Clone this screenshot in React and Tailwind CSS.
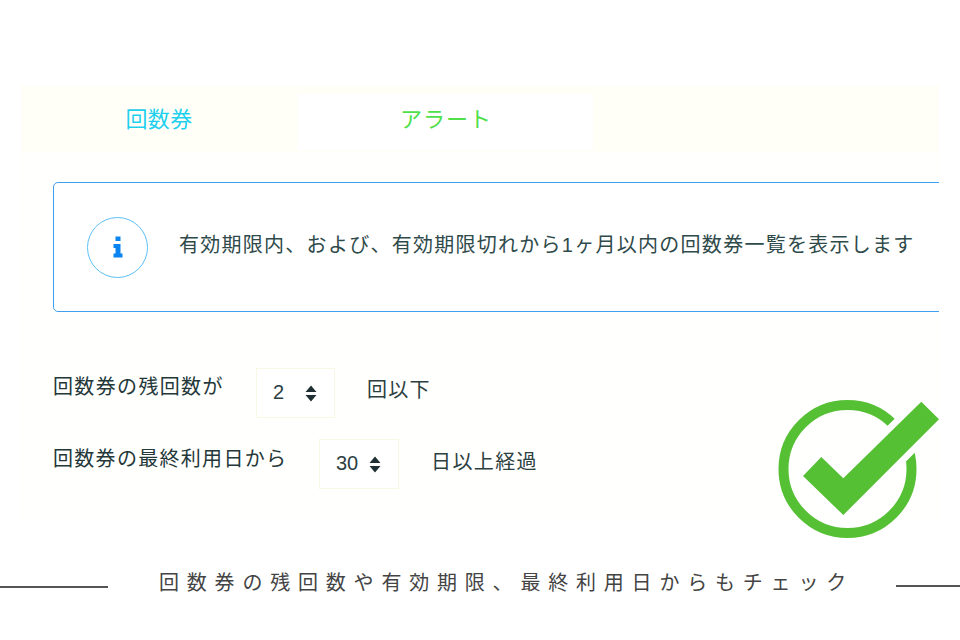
const CJK = "font-['Liberation_Sans','Noto_Sans_CJK_JP',sans-serif]";

function Spinner() {
  return (
    <svg width="12" height="17" viewBox="0 0 12 17" className="shrink-0">
      <path d="M6 0.5 L11.5 7 L0.5 7 Z M0.5 10 L11.5 10 L6 16.5 Z" fill="#1f2f33" />
    </svg>
  );
}

function NumberBox({ value, className }) {
  return (
    <div className={`flex h-[50px] items-center border border-[#f8f8e4] bg-white ${className}`}>
      <span className="-mt-[3px] text-[20px] leading-none text-[#2c3e42]">{value}</span>
      <Spinner />
    </div>
  );
}

function CheckMark() {
  const check = "M143.3 1.7 L161 19.3 L65.3 115 L25 76 L43.3 57 L65.3 78.3 Z";
  return (
    <svg width="162" height="140" viewBox="0 0 162 140" className="absolute left-[778px] top-[400px]">
      <circle cx="69.5" cy="69" r="64" fill="none" stroke="#56c035" strokeWidth="10" />
      <path d={check} fill="#ffffff" stroke="#ffffff" strokeWidth="13" />
      <path d={check} fill="#56c035" />
    </svg>
  );
}

export default function App() {
  return (
    <div className={`relative h-[640px] w-[960px] overflow-hidden bg-white ${CJK}`}>
      <div className="pt-[86px] pl-[21px] pr-[21px]">
        <div className="flex h-[66px] bg-[#fffff8] pt-[8px]">
          <div className="flex h-[56px] w-[276px] items-center justify-center pb-[6px] text-[22px] tracking-[0.3px] text-[#1fd0ee]">回数券</div>
          <div className="ml-[1px] flex h-[56px] w-[295px] items-center justify-center bg-white pb-[6px] pl-[1px] text-[22px] tracking-[1px] text-[#4fe04a]">アラート</div>
        </div>

        <div className="h-[370px] overflow-hidden bg-[#fffffd] pt-[30px] pl-[32px]">
          <div className="flex h-[130px] w-[920px] items-center rounded-[5px] border border-[#3f9fee] bg-white pb-[5px] pl-[33px]">
            <div className="mt-[5px] flex h-[61px] w-[61px] shrink-0 items-center justify-center rounded-full border border-[#5cc0f5]">
              <svg width="10" height="22" viewBox="0 0 10 22">
                <path d="M2.5 0.5 H7.5 V5 H2.5 Z M0.5 8 H7.5 V17.5 H9.5 V21.5 H0.5 V17.5 H2.5 V12 H0.5 Z" fill="#0a84f0" />
              </svg>
            </div>
            <p className="ml-[31px] text-[20px] leading-none tracking-[1.27px] text-[#2f4a4a]">
              有効期限内、および、有効期限切れから1ヶ月以内の回数券一覧を表示します
            </p>
          </div>

          <div className="mt-[56px] flex items-start">
            <span className="mt-[7px] w-[203px] text-[20px] leading-[24px] tracking-[1.35px] text-[#24383a]">回数券の残回数が</span>
            <NumberBox value="2" className="w-[79px] justify-between pl-[16px] pr-[17px]" />
            <span className="ml-[32px] mt-[10px] text-[20px] leading-[24px] tracking-[1.3px] text-[#2c4040]">回以下</span>
          </div>

          <div className="mt-[21px] flex items-start">
            <span className="mt-[8px] w-[266px] text-[20px] leading-[24px] tracking-[1.3px] text-[#24383a]">回数券の最終利用日から</span>
            <NumberBox value="30" className="w-[80px] gap-[11px] pl-[16px]" />
            <span className="ml-[32px] mt-[11px] text-[20px] leading-[24px] tracking-[1.4px] text-[#2c4040]">日以上経過</span>
          </div>
        </div>
      </div>

      <CheckMark />

      <div className="mt-[51px] flex items-center">
        <div className="mt-[8px] h-[2px] w-[108px] bg-[#555555]" />
        <p className="ml-[51px] w-[737px] text-[20px] leading-none tracking-[7.8px] text-[#444444]">
          回数券の残回数や有効期限、最終利用日からもチェック
        </p>
        <div className="mt-[6px] h-[2px] flex-1 bg-[#555555]" />
      </div>
    </div>
  );
}
